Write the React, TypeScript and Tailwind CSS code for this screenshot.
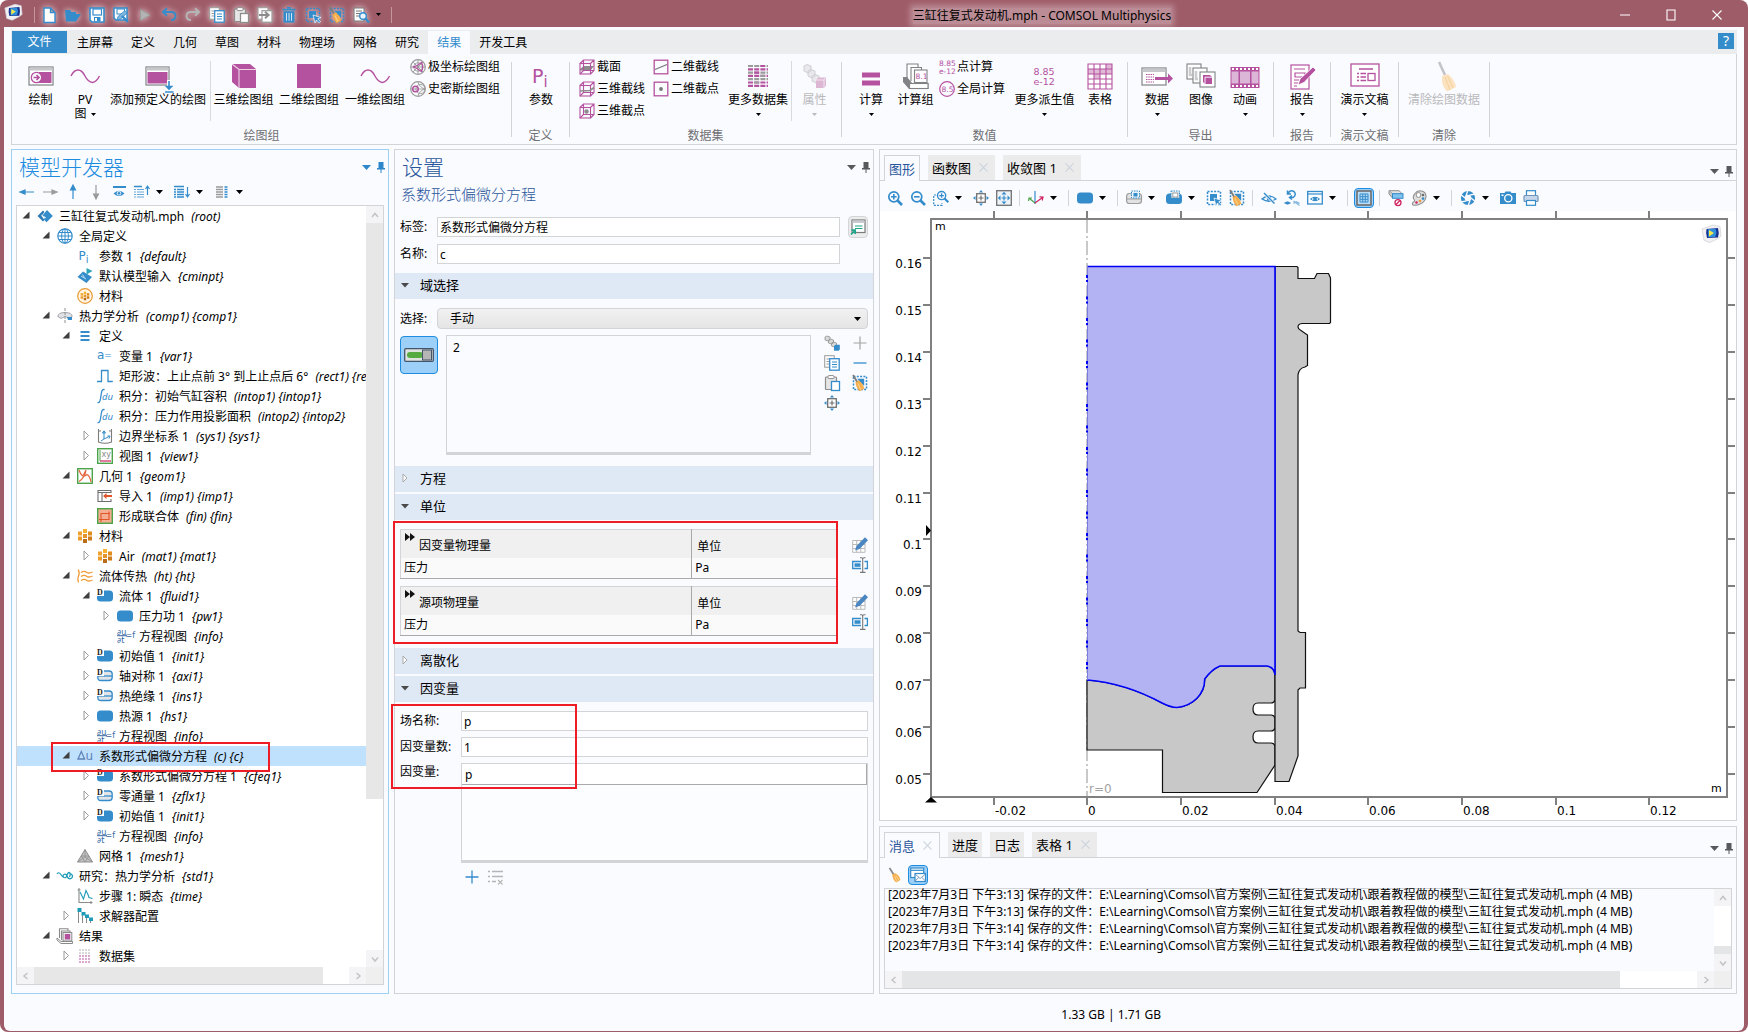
import React, { type ReactNode } from "react";

const B = "#358ccb";
const P = "#b5529f";
const G = "#808285";
const L = "#b4b4b4";

/* ---------- 16px icon drawings ---------- */

const dashedBox = <rect x="1.5" y="1.5" width="13" height="13" fill="none" stroke={B} strokeWidth="1.5" strokeDasharray="2 1.3" />;
const broom = (
  <g>
    <path d="M2.5 1 L7 8" stroke="#8a8a8a" strokeWidth="1.8" />
    <path d="M5.2 7.6 L8.6 6.2 Q13 9 13.4 13 L9.2 15.6 Q5.6 13 5.2 7.6Z" fill="#f5b04f" />
    <path d="M7.5 9 L10 14.6 M9 8.4 L12 13.4" stroke="#fbd9a2" strokeWidth="0.8" />
  </g>
);
const domain = <path d="M3.5 2.5 H12.5 Q16 2.5 16 6 V10 Q16 13.5 12.5 13.5 H3.5 Q0 13.5 0 10 V6 Q0 2.5 3.5 2.5Z" fill={B} />;
const letterD = (
  <g>
    <rect x="0" y="0" width="7" height="8" fill="#fff" />
    <text x="0" y="7" fontSize="8" fontWeight="700" fontFamily="Liberation Serif" fill="#222">D</text>
  </g>
);
const cube = (
  <g fill="none" stroke={P} strokeWidth="1.1">
    <rect x="1" y="4.5" width="10.5" height="10.5" />
    <path d="M1 4.5 L4.5 1 H15 V11.5 L11.5 15 M11.5 4.5 L15 1 M4.5 1 V11.5 H15 M4.5 11.5 L1 15" />
  </g>
);
const orangeBlocks = (
  <g>
    <rect x="1" y="3.5" width="4" height="4" fill="#f0a22f" />
    <rect x="6" y="1" width="4" height="4" fill="#f7b234" />
    <rect x="11" y="3.5" width="4" height="4" fill="#e08c1f" />
    <rect x="1" y="8.5" width="4" height="4" fill="#ee9b28" />
    <rect x="6" y="6" width="4" height="4" fill="#e3942c" />
    <rect x="11" y="8.5" width="4" height="4" fill="#cf7d1c" />
    <rect x="6" y="11" width="4" height="4" fill="#b96d1a" />
  </g>
);
const magnifier = (
  <g fill="none" stroke={B}>
    <circle cx="6.8" cy="6.8" r="5" strokeWidth="1.7" />
    <path d="M10.5 10.5 L15 15" strokeWidth="2.6" />
  </g>
);
const targetArrows = (
  <g fill={B}>
    <path d="M8 0 L10 2.5 H6Z M8 16 L10 13.5 H6Z M0 8 L2.5 6 V10Z M16 8 L13.5 6 V10Z" />
  </g>
);
const boundary = (
  <g>
    <path d="M3.5 3 H12 Q15.2 3 15.2 6 V9.5 Q15.2 12.5 12 12.5 H3.8 Q.8 12.5 .8 9.5 V6 Q.8 3 3.5 3Z" fill="#e2e4e8" stroke={B} strokeWidth="1.3" />
    <path d="M1 8 H15" stroke={B} strokeWidth="1.3" />
  </g>
);
const cubes = (last: string) => (
  <g>
    <path d="M1 2 L3 1 L6 2 V5 L4 6 L1 5Z M4.5 5 L6.5 4 L9.5 5 V8 L7.5 9 L4.5 8Z M7.5 8 L9.5 7 L12.5 8 V11 L10.5 12 L7.5 11Z" fill="#d9d9d9" stroke="#9a9a9a" strokeWidth=".9" />
    <path d="M10 11 L11.5 9.8 H15.8 V14.5 L14.5 15.8 H10Z" fill={last} />
  </g>
);

const icons: Record<string, ReactNode> = {
  new: <path d="M3 1 H9.5 L14 5.5 V15.5 H3Z M9.5 1 V5.5 H14" fill="#fff" stroke={B} strokeWidth="1.4" />,
  open: <path d="M0 3 H5 L6.5 5 H11 V7 H16 L11 14.5 H1Z" fill={B} />,
  save: (
    <g>
      <path d="M1 1 H15 V15 H3 L1 13Z" fill="#fff" stroke={B} strokeWidth="1.6" />
      <rect x="4" y="2" width="8.5" height="6" fill="#fff" stroke={B} strokeWidth="1.2" />
      <rect x="5" y="10" width="6.5" height="4.5" fill={B} />
      <rect x="6" y="11" width="2" height="3" fill="#fff" />
    </g>
  ),
  saveas: (
    <g>
      <path d="M1 1 H14 V13 H3 L1 11Z" fill="#fff" stroke={B} strokeWidth="1.5" />
      <rect x="4" y="2" width="7.5" height="5" fill="#fff" stroke={B} />
      <path d="M4 13 L5 9.5 L12 3.5 L14 6 L7.5 12.2Z" fill="#7fb6df" stroke={B} strokeWidth=".8" />
      <path d="M9 9 L15 15" stroke={B} strokeWidth="2.4" />
    </g>
  ),
  run: <path d="M3.5 2.5 L13 8 L3.5 13.5Z" fill="#b3b3b3" stroke="#9b9b9b" />,
  undo: <path d="M2 5 H10 Q14.5 5 14.5 9 Q14.5 13 10 13 M6 1.2 L2 5 L6 8.8" fill="none" stroke={B} strokeWidth="1.9" />,
  redo: <path d="M14 5 H6 Q1.5 5 1.5 9 Q1.5 13 6 13 M10 1.2 L14 5 L10 8.8" fill="none" stroke="#b5b5b5" strokeWidth="1.9" />,
  copy: (
    <g>
      <rect x=".7" y=".7" width="9.5" height="11.5" fill="#fff" stroke="#9a9a9a" />
      <path d="M2.5 4 H5 M2.5 6.5 H5 M2.5 9 H5" stroke="#9a9a9a" />
      <rect x="5.7" y="3.7" width="9.5" height="11.5" fill="#fff" stroke={B} strokeWidth="1.3" />
      <path d="M8 7 H13 M8 9.5 H13 M8 12 H13" stroke={B} />
    </g>
  ),
  paste: (
    <g>
      <rect x="1.5" y="2" width="11" height="12.5" rx="1" fill="#e6e6e6" stroke="#8d8d8d" strokeWidth="1.2" />
      <rect x="4" y=".6" width="6" height="3" rx="1" fill="#fff" stroke="#8d8d8d" />
      <rect x="7.5" y="6.5" width="8" height="9" fill="#fff" stroke="#8d8d8d" strokeWidth="1.3" />
    </g>
  ),
  pasteBlue: (
    <g>
      <rect x="1.5" y="2" width="11" height="12.5" rx="1" fill="#e6e6e6" stroke="#8d8d8d" strokeWidth="1.2" />
      <rect x="4" y=".6" width="6" height="3" rx="1" fill="#fff" stroke="#8d8d8d" />
      <rect x="7.5" y="6.5" width="8" height="9" fill="#fff" stroke={B} strokeWidth="1.3" />
    </g>
  ),
  duplicate: (
    <g>
      <rect x="1" y=".7" width="10" height="11.5" fill="#fff" stroke="#9a9a9a" />
      <rect x="5" y="3.7" width="10" height="11.5" fill="#fff" stroke="#9a9a9a" strokeWidth="1.2" />
      <path d="M2 8 H11 M8 4.8 L11.6 8 L8 11.2" fill="none" stroke="#8d8d8d" strokeWidth="2" />
    </g>
  ),
  trash: (
    <g>
      <path d="M6 .8 H10 M1.5 2.6 H14.5" stroke={B} strokeWidth="1.6" />
      <path d="M2.5 4.2 H13.5 V15.6 H2.5Z" fill={B} />
      <path d="M5.5 6 V13.8 M8 6 V13.8 M10.5 6 V13.8" stroke="#cfe5f5" />
    </g>
  ),
  select: (
    <g>
      {dashedBox}
      <rect x="4" y="4" width="7" height="7" fill={B} />
      <path d="M8 8 L16 10.5 L12.8 11.8 L15.5 14.8 L14.2 16 L11.5 13 L10 16Z" fill={B} stroke="#fff" strokeWidth=".7" />
    </g>
  ),
  clearsel: (
    <g>
      {dashedBox}
      <path d="M5 3.8 H12.2 V11Z" fill={B} />
      <path d="M1 0 L5.5 7.5" stroke="#7d7d7d" strokeWidth="1.8" />
      <path d="M3.8 7.4 L7 5.6 Q11 9 12.2 13.6 L7.6 16 Q4.2 12.5 3.8 7.4Z" fill="#f5b04f" stroke="#e79a34" strokeWidth=".4" />
      <path d="M6 8.5 L8.8 14.6" stroke="#fbd9a2" strokeWidth="0.8" />
    </g>
  ),
  find: (
    <g>
      <rect x="1" y="1" width="10" height="13" fill="#fff" stroke="#777" />
      <path d="M3 4 H9 M3 6.5 H9 M3 9 H6" stroke="#777" />
      <circle cx="10" cy="9" r="3.3" fill="#eaf4fc" stroke={B} strokeWidth="1.4" />
      <path d="M12.4 11.4 L16 15.4" stroke={B} strokeWidth="2.2" />
    </g>
  ),
  broom,
  root: (
    <g>
      <path d="M.5 8 L6 2.5 L7.5 4 L4.5 8 L7.5 12 L6 13.5Z" fill="#2e7ab5" />
      <path d="M5.5 7.5 L10 2 L15.8 8 L9.5 14.2 L6.5 11 L9 9.5Z" fill={B} />
      <path d="M4 7 L9 10" stroke="#bfe0f7" strokeWidth=".8" />
    </g>
  ),
  globe: (
    <g fill="none" stroke={B}>
      <circle cx="8" cy="8" r="7.2" strokeWidth="1.2" />
      <ellipse cx="8" cy="8" rx="3.4" ry="7.2" />
      <path d="M8 1 V15 M1 8 H15 M2 4.5 H14 M2 11.5 H14" />
    </g>
  ),
  pi: <text x="1.5" y="12" fontSize="12" fontFamily="DejaVu Sans" fill={B}>P<tspan fontSize="10" dy="3">i</tspan></text>,
  modelin: (
    <g>
      <path d="M.5 9 L6 3.5 L15 9 L9.5 15 L5 12Z" fill={B} />
      <path d="M4 8 L9 11 M5.5 6.5 L7.5 9.5" stroke="#cfe6f7" strokeWidth=".9" />
      <path d="M9.5 0 L15.5 3 L9.5 6.5Z" fill="#2ba3b8" />
    </g>
  ),
  matGlobe: (
    <g>
      <circle cx="8" cy="8" r="7.3" fill="#fff6e6" stroke="#e79a34" strokeWidth="1.2" />
      <g transform="translate(3 3) scale(.62)">{orangeBlocks}</g>
    </g>
  ),
  comp: (
    <g>
      <path d="M.8 8.5 Q1 4.5 8 4.5 Q15 4.5 15.2 8.5 L12 10 L8 8.5 L4 10.5Z" fill="#dfe1e4" stroke="#a5a8ac" />
      <path d="M10 9 H15 V12 H11Z" fill={B} />
      <path d="M8 0 V16" stroke="#8e9195" strokeDasharray="3 1" />
    </g>
  ),
  defs: <path d="M3.5 4 H12.5 M3.5 8 H12.5 M3.5 12 H12.5" stroke={B} strokeWidth="2" />,
  vara: <text x="0" y="11" fontSize="12" fontFamily="DejaVu Sans" fill={B}>a<tspan fontSize="9" dy="-1">=</tspan></text>,
  rect: <path d="M0 13.5 H4.5 V2.5 H11 V13.5 H15.8" fill="none" stroke={B} strokeWidth="1.3" />,
  intop: (
    <g>
      <path d="M.5 14.5 Q3 15.5 3.6 10 L4.4 5 Q5 .8 7.6 1.6" fill="none" stroke={B} strokeWidth="1.3" />
      <text x="5" y="12" fontSize="9.5" fontStyle="italic" fontFamily="Noto Sans" fill={B}>du</text>
    </g>
  ),
  sys: (
    <g fill="none">
      <path d="M1.5 1 V14 Q8 16.5 14.5 14 V1 M1.5 3 H4 M12 3 H14.5" stroke="#7c7c7c" strokeWidth="1.1" />
      <path d="M7 4 V11 L12 8.5 M7 11 L4 13 M7 2.8 L5.5 5 H8.5Z M10.5 8 L13 8 L12 10.5" stroke={B} />
    </g>
  ),
  view: (
    <g>
      <rect x=".7" y=".7" width="14.6" height="14.6" fill="#fff" stroke="#4da34a" strokeWidth="1.4" />
      <text x="4.5" y="8.5" fontSize="8" fontFamily="DejaVu Sans" fill="#8a8a8a">xy</text>
      <path d="M3 13 H14" stroke="#d0235f" strokeWidth="1.2" />
      <path d="M3 2 V13" stroke="#4da34a" />
    </g>
  ),
  geom: (
    <g fill="none">
      <rect x=".7" y=".7" width="14.6" height="14.6" stroke="#4da34a" strokeWidth="1.4" />
      <path d="M2 2 Q5 11 10 6.5 Q13 8 14 14 M2 13.5 Q8 9.5 9 2 L6.5 7" stroke="#e5653a" strokeWidth="1.2" />
    </g>
  ),
  imp: (
    <g fill="none" stroke="#6f6f6f">
      <path d="M14 5 V2.5 H1 V13.5 H14 V11 M1 4.5 H14 M5 4.5 V13.5" strokeWidth="1.1" />
      <path d="M15 8 H8" stroke="#e0562b" strokeWidth="2" />
      <path d="M6 8 L9.5 5 V11Z" fill="#e0562b" stroke="none" />
    </g>
  ),
  fin: (
    <g>
      <rect x=".7" y=".7" width="14.6" height="14.6" fill="#f4ae92" stroke="#4da34a" strokeWidth="1.4" />
      <path d="M2 11.5 H12 V3.5 M4 14 V5.5 H13" fill="none" stroke="#e0562b" strokeWidth="1.1" />
    </g>
  ),
  blocks: orangeBlocks,
  ht: (
    <g fill="none" stroke="#ef9c36" strokeWidth="1.3">
      <path d="M1.2 1.5 Q3 5 1.5 8 Q0 11 1.5 14.5" />
      <path d="M4 4.5 Q7 2.5 9.5 4.2 T15.5 4 M4 8.5 Q7 6.5 9.5 8.2 T15.5 8 M4 12.5 Q7 10.5 9.5 12.2 T15.5 12" />
    </g>
  ),
  domD: <g>{domain}{letterD}</g>,
  dom: domain,
  bndD: <g>{boundary}{letterD}</g>,
  eqview: (
    <g fill="#3567a3" fontFamily="DejaVu Sans">
      <text x="0" y="6.5" fontSize="8">∂u</text>
      <path d="M0 7.7 H10" stroke="#3567a3" />
      <text x="0" y="15" fontSize="8">∂t</text>
      <text x="8.5" y="9.5" fontSize="8">=f</text>
    </g>
  ),
  pde: (
    <g>
      <path d="M1 11 L4.3 3.5 L7.6 11Z" fill="none" stroke="#5f82b8" strokeWidth="1.3" />
      <text x="8.4" y="12" fontSize="12" fontFamily="DejaVu Sans" fill="#5f82b8">u</text>
    </g>
  ),
  mesh: (
    <g>
      <path d="M8 1.5 L15.5 14 H.5Z" fill="#c4c4c4" stroke="#8e8e8e" />
      <path d="M8 1.5 L8 9 L.5 14 M8 9 L15.5 14 M4.2 8 L12 8 L8 14Z" fill="none" stroke="#8e8e8e" strokeWidth=".8" />
    </g>
  ),
  study: <path d="M0 6 Q2 3.5 3.5 6 T7 9.5 Q9 10.5 10 7.5 Q11 4 12.5 4.5 Q14 6 12.5 9 M7 9.5 Q5 8 7 6.5 Q9 5.5 10 8 Q11 10.8 13 10.8 Q15.5 10.5 15.5 8 Q15 5.5 12.8 6.5" fill="none" stroke="#1f9bb8" strokeWidth="1.2" />,
  time: (
    <g fill="none">
      <path d="M2 0 V14.5 H15.5 M.5 2 H3.5 M14 13 V16" stroke="#8a8a8a" strokeWidth="1.1" />
      <path d="M3 4 L6.5 11 L9 2.5 Q11 6 12 9.5 L15.5 10.5" stroke="#1f9bb8" strokeWidth="1.1" />
    </g>
  ),
  solver: (
    <g>
      <path d="M1.5 2 V15 M5.5 6 V15 M9.5 9 V15 M13.5 12 V15" stroke="#8a8a8a" />
      <rect x=".5" y="0" width="4" height="4" fill="#1f9bb8" />
      <rect x="4.5" y="4" width="4" height="3.5" fill="#1f9bb8" />
      <rect x="8" y="6.5" width="4" height="3.5" fill="#1f9bb8" />
      <rect x="12" y="9.5" width="4" height="3.5" fill="#1f9bb8" />
    </g>
  ),
  results: (
    <g>
      <path d="M2.5 10 V.8 H11 V2.5 M4.5 12 V3 H13 V5" fill="none" stroke="#8a8a8a" strokeWidth="1.1" />
      <rect x="6" y="4.5" width="8.8" height="8.5" fill="#eee" stroke="#8a8a8a" />
      <rect x="7.8" y="6" width="5.4" height="5.5" fill={P} />
      <path d="M0 10 L4 13.5 H15.5 V15.5 H4 L0 12Z" fill="#fff" stroke="#8a8a8a" />
    </g>
  ),
  datasets: (
    <g strokeDasharray="2 1" strokeWidth="1.2">
      <path d="M2 2 H13 M2 5 H13" stroke={L} />
      <path d="M2 8 H13 M2 11 H13 M2 14 H13" stroke={P} />
    </g>
  ),
  arrowL: <path d="M15 8 H4 M6 6 L1 8 L6 10Z" fill={B} stroke={B} strokeWidth="1.2" />,
  arrowR: <path d="M1 8 H12 M10 6 L15 8 L10 10Z" fill="#9b9b9b" stroke="#9b9b9b" strokeWidth="1.2" />,
  arrowU: <path d="M8 15 V4 M5.5 6 L8 1 L10.5 6Z" fill={B} stroke={B} strokeWidth="1.2" />,
  arrowD: <path d="M8 1 V12 M5.5 10 L8 15 L10.5 10Z" fill="#9b9b9b" stroke="#9b9b9b" strokeWidth="1.2" />,
  eyeTop: (
    <g>
      <path d="M2 3 H15" stroke={B} strokeWidth="1.8" />
      <path d="M2.5 9.5 Q8 4 13.5 9.5 Q8 14.5 2.5 9.5Z" fill={B} />
      <circle cx="8" cy="9.3" r="2.3" fill="#cfe6f7" />
      <circle cx="8" cy="9.3" r="1.2" fill={B} />
    </g>
  ),
  listUp: (
    <g stroke={B}>
      <path d="M0 2.5 H8" strokeWidth="1.6" />
      <path d="M0 5.5 H2 M0 8 H2 M0 10.5 H2 M0 13 H2 M3 5.5 H10 M3 8 H10 M3 10.5 H10 M3 13 H10" strokeOpacity=".75" />
      <path d="M13.5 11 V3 M11.5 5 L13.5 2 L15.5 5" fill="none" strokeWidth="1.2" />
    </g>
  ),
  listDown: (
    <g stroke={B}>
      <path d="M0 2.5 H10" strokeWidth="1.6" />
      <path d="M0 5.5 H2 M0 8 H2 M0 10.5 H2 M0 13 H2 M3 5.5 H10 M3 8 H10 M3 10.5 H10 M3 13 H10" strokeWidth="1.3" />
      <path d="M13.5 3 V12 M11.5 10 L13.5 13 L15.5 10" fill="none" strokeWidth="1.2" />
    </g>
  ),
  listCols: (
    <g>
      <path d="M2 3 H9 M2 5.5 H9 M2 8 H9 M2 10.5 H9 M2 13 H9" stroke="#9b9b9b" strokeWidth="1.3" />
      <path d="M10.5 3 H13.5 M10.5 5.5 H13.5 M10.5 8 H13.5 M10.5 10.5 H13.5 M10.5 13 H13.5" stroke={B} strokeWidth="1.5" />
    </g>
  ),
  zoomIn: <g>{magnifier}<path d="M4 6.8 H9.6 M6.8 4 V9.6" stroke={B} strokeWidth="1.6" /></g>,
  zoomOut: <g>{magnifier}<path d="M4 6.8 H9.6" stroke={B} strokeWidth="1.6" /></g>,
  zoomBox: (
    <g>
      <path d="M3 5 H0.7 V15.3 H9 V13" fill="none" stroke={B} strokeWidth="1.2" strokeDasharray="2 1.2" />
      <g transform="translate(3 0) scale(.82)">{magnifier}<path d="M4 6.8 H9.6 M6.8 4 V9.6" stroke={B} strokeWidth="1.6" /></g>
    </g>
  ),
  target: (
    <g>
      {targetArrows}
      <rect x="3.7" y="3.7" width="8.6" height="8.6" fill="#fff" stroke="#707070" strokeWidth="1.3" />
      <path d="M5.5 8 H10.5 M8 5.5 V10.5" stroke="#707070" strokeWidth="1.2" />
    </g>
  ),
  extents: (
    <g>
      <rect x=".7" y=".7" width="14.6" height="14.6" fill="#eef3f8" stroke="#707070" strokeWidth="1.3" />
      <path d="M8 1.8 L10.5 4.5 H5.5Z M8 14.2 L10.5 11.5 H5.5Z M1.8 8 L4.5 5.5 V10.5Z M14.2 8 L11.5 5.5 V10.5Z" fill={B} />
      <path d="M5.5 8 H10.5 M8 5.5 V10.5" stroke={B} strokeWidth="1.2" />
    </g>
  ),
  axes: (
    <g fill="none" strokeWidth="1.2">
      <path d="M7 1 V14" stroke={B} />
      <path d="M7 13 L1.5 8.5 M0.5 11 L1 8 L4 8" stroke="#4da34a" />
      <path d="M7 13 L14.5 7.5 M11.5 6.8 L15 7 L14.2 10.5" stroke="#d0235f" />
    </g>
  ),
  selDomain: (
    <g>
      <path d="M3.500 3.500 H12.5 Q15.500 3.500 15.500 6.500 V10.500 Q15.500 13.500 12.5 13.500 H3.500 Q.6 13.500 .6 10.500 V6.500 Q.6 3.500 3.500 3.500Z M.6 9 H15.400" fill="#e2e2e2" stroke="#9d9d9d" strokeWidth="1.2" />
      <rect x="5.5" y="1" width="8" height="7" fill="#e8f3fb" stroke={B} strokeDasharray="1.5 1" />
      <rect x="7.5" y="3" width="4" height="3.5" fill={B} />
    </g>
  ),
  selDomainBlue: (
    <g>
      <path d="M3.5 3.500 H12.5 Q16 3.500 16 7 V10.5 Q16 14 12.5 14 H3.5 Q0 14 0 10.5 V7 Q0 3.500 3.5 3.500Z" fill={B} />
      <rect x="5" y="1" width="8.5" height="7" fill="#e8f3fb" stroke={B} strokeDasharray="1.5 1" />
      <rect x="6.8" y="3" width="5" height="4" fill="#fff" stroke="#9d9d9d" />
    </g>
  ),
  hide: (
    <g fill="none" stroke={B} strokeWidth="1.3">
      <path d="M1 9 Q8 3 15 9 Q8 13.500 1 9Z" />
      <circle cx="8" cy="8.6" r="1.6" fill={B} />
      <path d="M3.500 3.500 L13.500 13.500" stroke="#fafbff" strokeWidth="3" />
      <path d="M3 3 L13.500 13.500" strokeWidth="1.5" />
    </g>
  ),
  resetHide: (
    <g fill="none" stroke={B} strokeWidth="1.3">
      <path d="M4 3.500 Q6 -.5 10 1.500 Q13 5 9 7.500 H6 M3.500 .5 V4 H7 M8 5.500 L5.500 7.500 L8 9.500" strokeWidth="1.5" />
      <path d="M.5 13 Q3.500 10.300 6.500 13 Q3.500 15.500 .5 13Z" fill={B} strokeWidth=".6" />
      <path d="M9.500 11 L15.500 15.500 M9.500 13.500 Q12 10.500 15.500 13.500" opacity=".6" />
    </g>
  ),
  viewWin: (
    <g fill="none" stroke={B}>
      <rect x=".7" y="1.5" width="14.6" height="12.5" strokeWidth="1.3" fill="#fff" />
      <path d="M.7 4 H15.3" strokeWidth="1.2" />
      <path d="M3.5 9 Q8 5.5 12.5 9 Q8 12.5 3.5 9Z" />
      <circle cx="8" cy="9" r="1.4" fill={B} />
    </g>
  ),
  grid: (
    <g fill="none" stroke="#6d6d6d">
      <rect x="1" y="1" width="14" height="14" fill="#b9ddf8" strokeWidth="1.6" />
      <path d="M4 4 H12 V12 H4Z M6.7 4 V12 M9.3 4 V12 M4 6.7 H12 M4 9.3 H12" stroke={B} />
    </g>
  ),
  noClip: (
    <g>
      <path d="M1 .7 H11 L14.5 4 H5Z" fill="#e4e4e4" stroke="#8f8f8f" />
      <path d="M1 .7 V4 L4.5 8 V4" fill="#c8c8c8" stroke="#8f8f8f" />
      <rect x="4.5" y="3.7" width="10.5" height="4.6" fill="#80c3ef" stroke={B} />
      <circle cx="10" cy="12.6" r="3" fill="#fff" stroke="#d0235f" strokeWidth="1.3" />
      <path d="M8 14.5 L12 10.5" stroke="#d0235f" strokeWidth="1.3" />
    </g>
  ),
  palette: (
    <g>
      <path d="M9 .8 Q15 1 15 6.5 Q14.5 12 9 14 Q6 15.8 2 15 Q.5 13.5 2.5 12 Q4.5 11 2.8 9 Q1.5 7 3.5 4 Q6 .8 9 .8Z" fill="#dedede" stroke="#8f8f8f" strokeWidth="1.1" />
      <circle cx="7.5" cy="5" r="2.4" fill="#fff" stroke="#8f8f8f" />
      <circle cx="12" cy="5" r="1.3" fill="#6d6d6d" />
      <circle cx="12" cy="8.6" r="1.3" fill={B} />
      <circle cx="9" cy="11" r="1.3" fill="#ef9c36" />
      <circle cx="5.5" cy="12.5" r="1.2" fill="#d0235f" />
    </g>
  ),
  shutter: (
    <g>
      <circle cx="8" cy="8" r="5.2" fill="none" stroke={B} strokeWidth="3.800" />
      <path d="M8 0 L6 6 M15 4 L9.5 5.2 M15.3 11.5 L11 8 M8 16 L10 10.5 M1 12 L6.5 10.8 M.8 4.5 L5 8" stroke="#fafbff" strokeWidth="1.3" />
    </g>
  ),
  camera: (
    <g>
      <path d="M0 3 H4.5 L5.5 1.5 H10.5 L11.5 3 H16 V14 H0Z" fill={B} />
      <circle cx="8.3" cy="8.3" r="3.6" fill="none" stroke="#fff" strokeWidth="1.3" />
      <rect x="1.5" y="4.5" width="2" height="1.5" fill="#fff" />
    </g>
  ),
  print: (
    <g stroke={B} strokeWidth="1.2">
      <rect x="3.5" y=".7" width="9" height="5" fill="#fff" />
      <rect x="1" y="5.5" width="14" height="6" rx="1" fill="#c5d6ea" stroke="#6f93bb" />
      <rect x="3.5" y="10.5" width="9" height="4.8" fill="#fff" />
    </g>
  ),
  msgWin: (
    <g fill="#fff" stroke={B} strokeWidth="1.2">
      <rect x=".7" y="1" width="13" height="9.5" />
      <path d="M.7 3.3 H13.7" />
      <rect x="5" y="6.5" width="10.5" height="8" />
      <path d="M5 7 L10.2 11.5 L15.5 7 M5 14 L8.8 10.5 M15.5 14 L11.8 10.5" fill="none" stroke="#6f93bb" strokeWidth=".9" />
    </g>
  ),
  labelWin: (
    <g>
      <rect x="2" y="1" width="13" height="12.5" fill="#fff" stroke="#7a7a7a" strokeWidth="1.2" />
      <rect x="2.5" y="1.5" width="12" height="2.5" fill="#c9c9d2" />
      <path d="M5 7 H12.5 M5 9.5 H12.5" stroke="#1fa68c" strokeWidth="1.2" />
      <path d="M1 15.5 L4.5 12 M1.5 11.2 H5.2 V15" fill="none" stroke="#1fa68c" strokeWidth="1.7" />
    </g>
  ),
  cubesBlue: cubes(B),
  plusGray: <path d="M1.5 8 H14.5 M8 1.5 V14.5" stroke="#a3a3a3" strokeWidth="1.2" />,
  plus: <path d="M1.5 8 H14.5 M8 1.5 V14.5" stroke={B} strokeWidth="1.3" />,
  minus: <path d="M1.5 8 H14.5" stroke={B} strokeWidth="1.3" />,
  tablePen: (
    <g>
      <path d="M.7 3.5 H13 V15.3 H.7Z M.7 7.5 H13 M.7 11.5 H13 M4.7 3.5 V15.3 M8.8 3.5 V15.3" fill="#fff" stroke="#b9b9b9" />
      <path d="M3 13.5 L4.5 9 L13 .3 L16 3.2 L7.5 12Z" fill="#4a86c2" />
    </g>
  ),
  rename: (
    <g>
      <path d="M9 4.5 H.7 V11.5 H9 M12.5 4.5 H15.4 V11.5 H12.5" fill="none" stroke={B} strokeWidth="1.3" />
      <rect x="2.5" y="6.3" width="6" height="3.5" fill={B} />
      <path d="M10.7 1 V15.4 M8 .7 H9.5 Q10.7 .7 10.7 2 Q10.7 .7 12 .7 H13.5 M8 15.4 H13.5" fill="none" stroke="#777" strokeWidth="1.1" />
    </g>
  ),
  listX: (
    <g stroke="#b4b4b4" strokeWidth="1.7">
      <path d="M0 2.5 H2 M4 2.5 H15 M0 7.5 H2 M4 7.5 H15 M0 12.5 H2 M4 12.5 H8" />
      <path d="M10 11 L14.5 15.5 M14.5 11 L10 15.5" strokeWidth="1.1" />
    </g>
  ),
  polar: (
    <g fill="none" stroke="#9a9a9a" strokeWidth=".9">
      <circle cx="8" cy="8" r="7.3" strokeWidth="1.2" /><circle cx="8" cy="8" r="4.2" />
      <path d="M8 .7 V15.3 M.7 8 H15.3 M3 3 L13 13 M13 3 L3 13" />
      <path d="M11.5 3.5 Q14 8 11.5 12.5 L7 9.5 L3.5 8 L8 6Z" stroke={P} strokeWidth="1.3" />
    </g>
  ),
  smith: (
    <g fill="none" stroke="#9a9a9a" strokeWidth=".9">
      <circle cx="8" cy="8" r="7.3" strokeWidth="1.2" /><circle cx="10.5" cy="8" r="4.6" />
      <path d="M.7 8 H15.3 M8 1 Q9 6 15 8 Q9 10 8 15" />
      <circle cx="5.5" cy="8" r="2.8" stroke={P} strokeWidth="1.5" />
    </g>
  ),
  cutPlane: <g><path d="M1 10 L5 7 H15 L11.5 11.5 H1Z" fill="#8c8c8c" />{cube}</g>,
  cutLine3: <g>{cube}<path d="M1 10 L11 9.5 L15 6.5" fill="none" stroke="#8c8c8c" strokeWidth="1.6" /></g>,
  cutPoint3: <g>{cube}<circle cx="7.5" cy="8.5" r="2.2" fill="#8c8c8c" /></g>,
  cutLine2: (
    <g fill="none"><rect x="1.2" y="1.2" width="13.6" height="13.6" stroke={P} strokeWidth="1.3" /><path d="M2 10.5 L14 5.5" stroke="#777" strokeWidth="1.2" /></g>
  ),
  cutPoint2: (
    <g fill="none"><rect x="1.2" y="1.2" width="13.6" height="13.6" stroke={P} strokeWidth="1.3" /><circle cx="8" cy="8" r="1.9" fill="#777" /></g>
  ),
  pointEval: (
    <g fill={P} fontFamily="DejaVu Sans" fontSize="7.5"><text x="0" y="7">8.85</text><text x="0" y="14.5">e-12</text></g>
  ),
  globalEval: (
    <g><circle cx="8" cy="8" r="7.3" fill="none" stroke={P} strokeWidth="1.2" /><text x="2.6" y="10.8" fontSize="7.5" fontFamily="DejaVu Sans" fill={P}>8.5</text></g>
  ),
};

const LOGO = (
  <g>
    <path d="M1 5 L12 1 L19 2.5 L20 12 L18 14 L9 18.5 L3 16.5Z" fill="#f1f1f4" stroke="#d4d4da" strokeWidth=".8" />
    <path d="M5.5 5 L17 4 Q18.5 9 17 13.5 L6 14 Q4.5 9 5.5 5Z" fill="#16318f" />
    <path d="M7 5.2 L14.500 4.800 Q16.500 9 14 13 L7.300 13.2Z" fill="#2f8fdb" />
    <path d="M8 6 L13 9 L8 12.500Z" fill="#f3e94b" />
  </g>
);

/* ---------- 26px ribbon drawings ---------- */

const bigCube = <g><path d="M1 1 H19 L25 6 V25 H8 L1 19Z" fill={P} /><path d="M1 1 L8 6.5 H25 M8 6.5 V25" fill="none" stroke="#ecd3e6" strokeWidth="1.1" /></g>;

const bigIcons: Record<string, ReactNode> = {
  plot: (
    <g>
      <rect x="1" y="4" width="24" height="18" fill="#fff" stroke={G} strokeWidth="1.2" />
      <rect x="1.5" y="4.5" width="23" height="3" fill="#c5c7ca" />
      <rect x="11" y="9" width="12.5" height="11" fill={P} />
      <circle cx="8.5" cy="14.5" r="5.2" fill="#fafbff" stroke={P} strokeWidth="1.3" />
      <path d="M5.5 14.5 H11 M8.5 12 L11 14.5 L8.5 17" fill="none" stroke={P} strokeWidth="1.7" />
    </g>
  ),
  wave: <path d="M-1 13 Q2 7 6 7 Q10 7 13 13 T20.500 19.500 Q24.500 19 27.500 13" fill="none" stroke={P} strokeWidth="1.4" />,
  addplot: (
    <g>
      <rect x="1" y="4" width="23" height="18" fill="#fff" stroke={G} strokeWidth="1.2" />
      <rect x="1.5" y="4.5" width="22" height="3" fill="#c5c7ca" />
      <rect x="2.5" y="9" width="20" height="11.5" fill={P} />
      <path d="M24 17 V25" stroke="#fff" strokeWidth="4" />
      <path d="M24 18 V25 M21.500 23.500 L24 26 L26.500 23.500Z M20 29 H28.500" fill={B} stroke={B} strokeWidth="1.6" />
    </g>
  ),
  cube: bigCube,
  square: <rect x="1" y="1" width="24" height="24" fill={P} />,
  pi: <text x="4" y="20" fontSize="19" fontFamily="DejaVu Sans" fill={P}>P<tspan fontSize="15" dy="4">i</tspan></text>,
  moredata: (
    <g strokeWidth="2.2">
      <path d="M3 3 H23 M3 9.6 H23 M3 16.2 H23" stroke="#9b9b9b" strokeDasharray="5 1.2" />
      <path d="M3 6.3 H23 M3 12.9 H23 M3 19.5 H23 M3 22.8 H23" stroke={P} strokeDasharray="5 1.2" />
      <path d="M9.2 9.6 H14.2 M15.4 3 H20" stroke={P} />
      <path d="M9.2 19.5 H14.2 M15.4 12.9 H20" stroke="#9b9b9b" />
    </g>
  ),
  attr: (
    <g>
      <path d="M2 3 L5 1.5 L9 3 V8 L6 10 L2 8Z M6 8 L9 6.5 L13 8 V13 L10 15 L6 13Z M10 13 L13 11.5 L17 13 V18 L14 20 L10 18Z" fill="#e9e9ec" stroke="#cfcfd4" />
      <path d="M14 17 L16.5 14.5 H24 V22.5 L22 25 H14Z" fill="#dcb6d3" />
      <path d="M14 17 H22 V25 M22 17 L24 14.5" fill="none" stroke="#f3e4f0" />
    </g>
  ),
  equals: <path d="M4 12 H22 M4 20 H22" stroke={P} strokeWidth="5" />,
  evalgroup: (
    <g>
      <path d="M4 18 V1 H15 V4 M8 18 V4.5 H18.5 V7" fill="#fff" stroke={G} strokeWidth="1.1" />
      <rect x="11.5" y="7" width="12.500" height="12.500" fill="#fff" stroke={G} strokeWidth="1.1" />
      <text x="12.500" y="16" fontSize="7.500" fontFamily="DejaVu Sans" fill={P}>8.1</text>
      <path d="M0 14 L4 14 L9 20 L25.500 20 V26 H6 L0 19Z" fill={G} />
      <rect x="6.500" y="20.500" width="18.500" height="5" fill="#fff" stroke={G} strokeWidth="1.1" />
    </g>
  ),
  eval885: (
    <g fill={P} fontFamily="DejaVu Sans" fontSize="9.5"><text x="1.5" y="12">8.85</text><text x="1.5" y="22">e-12</text></g>
  ),
  table: (
    <g>
      <rect x="1" y="1" width="24" height="25" fill="#fff" />
      <path d="M19 1 H25 V6 H19Z M1 6 H25 V11 H1Z M7 11 H13 V16 H7Z" fill="#dfb9d6" />
      <path d="M1 1 H25 V26 H1Z M1 6 H25 M1 11 H25 M1 16 H25 M1 21 H25 M7 1 V26 M13 1 V26 M19 1 V26" fill="none" stroke={P} strokeWidth="1.1" />
    </g>
  ),
  dataout: (
    <g>
      <rect x="-2" y="5" width="24" height="17" fill="#fff" stroke={G} strokeWidth="1.2" />
      <rect x="-1.5" y="5.5" width="23" height="3.5" fill="#c5c7ca" />
      <path d="M2 11.5 H10 M2 14 H10 M2 16.5 H10 M2 19 H10" stroke={P} strokeWidth="1.2" strokeDasharray="1.5 .8" />
      <path d="M11 15.5 H25" stroke={P} strokeWidth="3" /><path d="M24 10.5 L29 15.5 L24 20.5Z" fill={P} />
    </g>
  ),
  images: (
    <g fill="#fff" stroke={G} strokeWidth="1.1">
      <rect x="-1" y="1" width="14" height="15" /><rect x="5" y="5" width="14" height="15" /><rect x="12" y="9" width="15" height="15" />
      <path d="M2 4 V12 H4 M8 8 V16 H10" stroke="#ccc" strokeWidth="2.500" fill="none" />
      <path d="M15 12 H22 L24 14 V21 H17 L15 19Z" fill={P} stroke="none" /><path d="M17 14.2 H24 M17 14.2 V21" stroke="#fff" strokeWidth=".9" />
    </g>
  ),
  film: (
    <g>
      <rect x="-1.5" y="4" width="29" height="21" fill={P} />
      <path d="M0 6 H27 M0 23 H27" stroke="#fff" strokeWidth="2" strokeDasharray="2 2" />
      <rect x="-.5" y="8.5" width="7" height="12" fill="#dcb6d6" /><rect x="8" y="8.5" width="10" height="12" fill="#dcb6d6" /><rect x="19.5" y="8.5" width="7" height="12" fill="#dcb6d6" />
    </g>
  ),
  report: (
    <g fill="none" stroke={P} strokeWidth="1.2">
      <rect x="2" y="2" width="18" height="24" fill="#fff" />
      <path d="M5 6 H16 M6 10 H16 V14 H6Z M5 17 H10 M5 20 H9 M5 23 H8" />
      <path d="M9 22 L11 16 L24 4 L27 7 L15 19.5Z" fill={P} stroke="#fff" strokeWidth=".8" />
    </g>
  ),
  slides: (
    <g fill="none" stroke={P} strokeWidth="1.3">
      <rect x="-1" y="1" width="28" height="22" fill="#fff" />
      <path d="M7 6 H21 M5 10.5 H7 M8.5 10.5 H14 M5 14 H7 M8.5 14 H14 M5 17.5 H7 M8.5 17.5 H14" />
      <rect x="16" y="10.5" width="7" height="7" />
    </g>
  ),
  bigbroom: (
    <g>
      <path d="M8 -1 L14 12" stroke="#c4c4c8" strokeWidth="2.6" />
      <path d="M11 13 L17 11 Q24 17 25 24 L16 28.5 Q10 23 11 13Z" fill="#fbe3c1" />
      <path d="M14 14 L19 27 M16.5 13 L22 25" stroke="#f5cf97" />
    </g>
  ),
};

function Icon({ name, className = "size-4" }: { name: string; className?: string }) {
  return (
    <svg viewBox="0 0 16 16" className={`${className} shrink-0 overflow-visible`} aria-hidden="true">
      {icons[name]}
    </svg>
  );
}

function BigIcon({ name }: { name: string }) {
  return (
    <svg viewBox="0 0 26 26" className="size-[26px] shrink-0 overflow-visible" aria-hidden="true">
      {bigIcons[name]}
    </svg>
  );
}

function Caret({ className = "text-black" }: { className?: string }) {
  return (
    <svg viewBox="0 0 7 4" className={`h-1 w-[7px] shrink-0 ${className}`} aria-hidden="true">
      <path d="M0 0 H7 L3.5 4Z" fill="currentColor" />
    </svg>
  );
}

function SmallCaret({ className = "text-black" }: { className?: string }) {
  return (
    <svg viewBox="0 0 5 3" className={`h-[3px] w-[5px] shrink-0 ${className}`} aria-hidden="true">
      <path d="M0 0 H5 L2.5 3Z" fill="currentColor" />
    </svg>
  );
}

function Chevron({ d }: { d: "up" | "down" | "left" | "right" }) {
  const paths = { up: "M2 7 L5 3.5 L8 7", down: "M2 3.5 L5 7 L8 3.5", left: "M6.5 2 L3 5 L6.5 8", right: "M3.5 2 L7 5 L3.5 8" };
  return (
    <button type="button" aria-label={d} className="flex size-[17px] shrink-0 items-center justify-center bg-[#f4f4f6]">
      <svg viewBox="0 0 10 10" className="size-2.5"><path d={paths[d]} fill="none" stroke="#c3c3c6" strokeWidth="1.5" /></svg>
    </button>
  );
}

function PanelControls({ className = "text-[#58595b]" }: { className?: string }) {
  return (
    <div className={`flex items-center gap-1.5 ${className}`}>
      <button type="button" aria-label="menu" className="flex w-2.5 justify-center">
        <svg viewBox="0 0 9 5" className="h-[5px] w-[9px]"><path d="M0 0 H9 L4.5 5Z" fill="currentColor" /></svg>
      </button>
      <button type="button" aria-label="pin">
        <svg viewBox="0 0 8 11" className="h-[11px] w-2"><path d="M1.5 0 H6.5 V6 H8 V7.5 H4.5 V11 H3.5 V7.5 H0 V6 H1.5Z" fill="currentColor" /></svg>
      </button>
    </div>
  );
}

/* ---------- title bar ---------- */

const quick = ["new", "open", "save", "saveas", "run", "undo", "redo", "copy", "paste", "duplicate", "trash", "select", "clearsel", "find"];

function TitleBar() {
  return (
    <header className="flex h-[27px] shrink-0 items-center pt-0.5">
      <svg viewBox="0 0 21 20" className="mb-1 size-[19px] shrink-0">{LOGO}</svg>
      <div className="ml-[11px] flex items-center border-x border-[#c4979f] pr-2 pl-[2px]">
        {quick.map((q) => (
          <button key={q} type="button" aria-label={q} className="flex w-6 justify-center drop-shadow-[0_0_3px_rgba(255,255,255,0.75)]">
            <Icon name={q} />
          </button>
        ))}
        <button type="button" aria-label="more" className="flex w-2.5 justify-center"><SmallCaret /></button>
      </div>
      <div className="flex flex-1 justify-center pt-0.5 pl-[90px]">
        <h1 className="h-4 bg-white/30 text-xs leading-4 whitespace-nowrap shadow-[0_0_6px_3px_rgba(255,255,255,0.3)]">三缸往复式发动机.mph - COMSOL Multiphysics</h1>
      </div>
      <div className="mr-1 flex text-white">
        {["M3 8 H13", "M4 3 H12 V13 H4Z", "M3.5 3.5 L12.5 12.5 M12.5 3.5 L3.5 12.5"].map((d, i) => (
          <button key={d} type="button" aria-label={["minimize", "maximize", "close"][i]} className="flex w-[46px] justify-center">
            <svg viewBox="0 0 16 16" className="size-4"><path d={d} fill="none" stroke="currentColor" strokeWidth="1.1" /></svg>
          </button>
        ))}
      </div>
    </header>
  );
}

/* ---------- ribbon ---------- */

function Big({ icon, label, w, menu, second, disabled }: { icon: string; label: string; w: string; menu?: boolean; second?: string; disabled?: boolean }) {
  return (
    <button type="button" disabled={disabled} className={`flex shrink-0 flex-col items-center pt-[7px] ${w} ${disabled ? "text-[#b9b9bc]" : ""}`}>
      <BigIcon name={icon} />
      <span className="mt-1 text-xs leading-[14px] whitespace-nowrap">{label}</span>
      {(menu || second) && (
        <span className="flex h-[14px] items-center gap-1 text-xs leading-[14px]">
          {second}
          <SmallCaret className={disabled ? "text-[#b9b9bc]" : "text-black"} />
        </span>
      )}
    </button>
  );
}

function SmallCol({ items, className }: { items: [string, string][]; className: string }) {
  return (
    <div className={`flex shrink-0 flex-col ${className}`}>
      {items.map(([icon, label]) => (
        <button key={label} type="button" className="flex h-[22px] items-center gap-0.5 text-xs leading-4 whitespace-nowrap">
          <Icon name={icon} />
          {label}
        </button>
      ))}
    </div>
  );
}

const InnerRule = () => <div className="mt-[5px] mb-[7px] w-px shrink-0 bg-[#d9dade]" />;

function Group({ title, children }: { title: string; children: ReactNode }) {
  return (
    <>
      <section className="flex flex-col pt-0.5" aria-label={title}>
        <div className="flex h-[72px]">{children}</div>
        <div className="text-center text-xs leading-4 text-[#6f7073]">{title}</div>
      </section>
      <div className="mt-2 mb-[7px] w-px shrink-0 bg-[#d3d4d8]" />
    </>
  );
}

const tabs = ["主屏幕", "定义", "几何", "草图", "材料", "物理场", "网格", "研究", "结果", "开发工具"];

function Ribbon() {
  return (
    <div className="mx-[7px] mt-[3px] shrink-0">
      <nav className="flex h-6 bg-[#ebecee] pt-px text-xs">
        <button type="button" className="mr-px ml-px h-[22px] w-[55px] bg-[#358ccb] text-white">文件</button>
        {tabs.map((t) => (
          <button key={t} type="button" className={`px-[9px] ${t === "结果" ? "bg-[#fafbff] text-[#358ccb]" : ""}`}>{t}</button>
        ))}
        <button type="button" className="mt-0.5 mr-[3px] ml-auto size-4 bg-[#358ccb] text-sm leading-4 text-white">?</button>
      </nav>
      <div className="flex h-[91px] border border-t-0 border-[#d3d4d8]">
        <Group title="绘图组">
          <Big icon="plot" label="绘制" w="ml-[5px] w-[47px]" />
          <Big icon="wave" label="PV" second="图" w="w-[42px]" />
          <Big icon="addplot" label="添加预定义的绘图" w="w-[104px]" />
          <InnerRule />
          <Big icon="cube" label="三维绘图组" w="w-[65px]" />
          <Big icon="square" label="二维绘图组" w="w-[66px]" />
          <Big icon="wave" label="一维绘图组" w="w-[66px]" />
          <SmallCol className="ml-0.5 w-[101px]" items={[["polar", "极坐标绘图组"], ["smith", "史密斯绘图组"]]} />
        </Group>
        <Group title="定义">
          <Big icon="pi" label="参数" w="mr-1 ml-[5px] w-12" />
        </Group>
        <Group title="数据集">
          <SmallCol className="ml-[9px] w-[74px]" items={[["cutPlane", "截面"], ["cutLine3", "三维截线"], ["cutPoint3", "三维截点"]]} />
          <SmallCol className="w-[72px]" items={[["cutLine2", "二维截线"], ["cutPoint2", "二维截点"]]} />
          <Big icon="moredata" label="更多数据集" w="w-[66px]" menu />
          <InnerRule />
          <Big icon="attr" label="属性" w="mr-1 w-[45px]" menu disabled />
        </Group>
        <Group title="数值">
          <Big icon="equals" label="计算" w="ml-[5px] w-12" menu />
          <Big icon="evalgroup" label="计算组" w="w-[41px]" />
          <SmallCol className="ml-[3px] w-[71px]" items={[["pointEval", "点计算"], ["globalEval", "全局计算"]]} />
          <Big icon="eval885" label="更多派生值" w="w-[69px]" menu />
          <Big icon="table" label="表格" w="mr-1.5 w-[42px]" />
        </Group>
        <Group title="导出">
          <Big icon="dataout" label="数据" w="ml-[7px] w-11" menu />
          <Big icon="images" label="图像" w="w-11" />
          <Big icon="film" label="动画" w="mr-1.5 w-11" menu />
        </Group>
        <Group title="报告">
          <Big icon="report" label="报告" w="mx-1 w-12" menu />
        </Group>
        <Group title="演示文稿">
          <Big icon="slides" label="演示文稿" w="w-[67px]" menu />
        </Group>
        <Group title="清除">
          <Big icon="bigbroom" label="清除绘图数据" w="w-[90px]" disabled />
        </Group>
      </div>
    </div>
  );
}

/* ---------- toolbars ---------- */

function Tool({ name, on, menu }: { name: string; on?: boolean; menu?: boolean }) {
  return (
    <>
      <button type="button" aria-label={name} className="flex w-[23px] shrink-0 justify-center">
        {on ? (
          <span className="flex size-5 items-center justify-center rounded-sm border border-[#1c8be0] bg-[#9dd0f8]"><Icon name={name} /></span>
        ) : (
          <Icon name={name} />
        )}
      </button>
      {menu && (
        <button type="button" aria-label={`${name} menu`} className="mr-[5px] flex w-3 shrink-0 justify-center"><Caret /></button>
      )}
    </>
  );
}

const Sep = () => <div className="mx-1 h-4 w-px shrink-0 bg-[#d3d4d8]" />;

/* ---------- model tree ---------- */

type Node = { l: number; s?: "o" | "c"; i: string; t: string; x?: string; sel?: boolean };

const tree: Node[] = [
  { l: 0, s: "o", i: "root", t: "三缸往复式发动机.mph", x: "(root)" },
  { l: 1, s: "o", i: "globe", t: "全局定义" },
  { l: 2, i: "pi", t: "参数 1", x: "{default}" },
  { l: 2, i: "modelin", t: "默认模型输入", x: "{cminpt}" },
  { l: 2, i: "matGlobe", t: "材料" },
  { l: 1, s: "o", i: "comp", t: "热力学分析", x: "(comp1) {comp1}" },
  { l: 2, s: "o", i: "defs", t: "定义" },
  { l: 3, i: "vara", t: "变量 1", x: "{var1}" },
  { l: 3, i: "rect", t: "矩形波：上止点前 3° 到上止点后 6°", x: "(rect1) {rect1}" },
  { l: 3, i: "intop", t: "积分：初始气缸容积", x: "(intop1) {intop1}" },
  { l: 3, i: "intop", t: "积分：压力作用投影面积", x: "(intop2) {intop2}" },
  { l: 3, s: "c", i: "sys", t: "边界坐标系 1", x: "(sys1) {sys1}" },
  { l: 3, s: "c", i: "view", t: "视图 1", x: "{view1}" },
  { l: 2, s: "o", i: "geom", t: "几何 1", x: "{geom1}" },
  { l: 3, i: "imp", t: "导入 1", x: "(imp1) {imp1}" },
  { l: 3, i: "fin", t: "形成联合体", x: "(fin) {fin}" },
  { l: 2, s: "o", i: "blocks", t: "材料" },
  { l: 3, s: "c", i: "blocks", t: "Air", x: "(mat1) {mat1}" },
  { l: 2, s: "o", i: "ht", t: "流体传热", x: "(ht) {ht}" },
  { l: 3, s: "o", i: "domD", t: "流体 1", x: "{fluid1}" },
  { l: 4, s: "c", i: "dom", t: "压力功 1", x: "{pw1}" },
  { l: 4, i: "eqview", t: "方程视图", x: "{info}" },
  { l: 3, s: "c", i: "domD", t: "初始值 1", x: "{init1}" },
  { l: 3, s: "c", i: "bndD", t: "轴对称 1", x: "{axi1}" },
  { l: 3, s: "c", i: "bndD", t: "热绝缘 1", x: "{ins1}" },
  { l: 3, s: "c", i: "dom", t: "热源 1", x: "{hs1}" },
  { l: 3, i: "eqview", t: "方程视图", x: "{info}" },
  { l: 2, s: "o", i: "pde", t: "系数形式偏微分方程", x: "(c) {c}", sel: true },
  { l: 3, s: "c", i: "domD", t: "系数形式偏微分方程 1", x: "{cfeq1}" },
  { l: 3, s: "c", i: "bndD", t: "零通量 1", x: "{zflx1}" },
  { l: 3, s: "c", i: "domD", t: "初始值 1", x: "{init1}" },
  { l: 3, i: "eqview", t: "方程视图", x: "{info}" },
  { l: 2, i: "mesh", t: "网格 1", x: "{mesh1}" },
  { l: 1, s: "o", i: "study", t: "研究：热力学分析", x: "{std1}" },
  { l: 2, i: "time", t: "步骤 1: 瞬态", x: "{time}" },
  { l: 2, s: "c", i: "solver", t: "求解器配置" },
  { l: 1, s: "o", i: "results", t: "结果" },
  { l: 2, s: "c", i: "datasets", t: "数据集" },
];

function TreeRow({ n }: { n: Node }) {
  return (
    <li
      className={`relative flex h-5 items-center text-xs leading-5 whitespace-nowrap ${n.sel ? "bg-[#c0e1fd]" : ""}`}
      style={{ paddingLeft: 3 + n.l * 20 }}
    >
      <svg viewBox="0 0 12 12" className="size-3 shrink-0">
        {n.s === "o" && <path d="M9.5 1.5 V8.5 H2.5Z" fill="#3f3f3f" />}
        {n.s === "c" && <path d="M4 1 L8.5 5.5 L4 10Z" fill="#fff" stroke="#9a9a9a" />}
      </svg>
      <span className="ml-[5px] flex"><Icon name={n.i} /></span>
      <span className="ml-1.5 pt-0.5">{n.t}</span>
      {n.x && <i className="ml-[7px] pt-0.5">{n.x}</i>}
      {n.sel && <span className="absolute -top-1 left-[34px] z-10 h-[30px] w-[219px] border-2 border-[#ee1c25]" />}
    </li>
  );
}

function ModelBuilder() {
  return (
    <aside className="flex min-w-0 flex-col border border-[#9dd0f3]">
      <div className="flex h-8 items-center justify-between pt-0.5 pr-[3px] pl-[7px]">
        <h2 className="text-[21px] leading-7 font-light text-[#1c8be0]">模型开发器</h2>
        <PanelControls className="text-[#2b86cc]" />
      </div>
      <div className="flex h-5 items-center pl-[3px]">
        <Tool name="arrowL" />
        <Tool name="arrowR" />
        <Tool name="arrowU" />
        <Tool name="arrowD" />
        <Tool name="eyeTop" />
        <Tool name="listUp" menu />
        <Tool name="listDown" menu />
        <Tool name="listCols" menu />
      </div>
      <div className="mx-1 mt-[3px] mb-2 flex min-h-0 flex-1 flex-col border border-[#d3d4d8] bg-white">
        <div className="flex min-h-0 flex-1">
          <ul className="min-w-0 flex-1 overflow-hidden">
            {tree.map((n, i) => <TreeRow key={i} n={n} />)}
          </ul>
          <div className="flex w-[17px] shrink-0 flex-col">
            <Chevron d="up" />
            <div className="flex-[576] bg-[#e7e7e7]" />
            <div className="flex-[151]" />
            <Chevron d="down" />
          </div>
        </div>
        <div className="flex h-[17px] shrink-0 bg-[#f4f4f6]">
          <Chevron d="left" />
          <div className="flex-[289] bg-[#e7e7e7]" />
          <div className="flex-[26] bg-white" />
          <Chevron d="right" />
          <div className="w-[17px] bg-[#efefef]" />
        </div>
      </div>
    </aside>
  );
}

/* ---------- settings ---------- */

function SectionHead({ title, open, className = "" }: { title: string; open?: boolean; className?: string }) {
  return (
    <button type="button" aria-expanded={!!open} className={`flex h-[26px] w-full shrink-0 items-center bg-[#dfe8f5] pb-0.5 pl-[5px] text-left text-[13px] leading-5 ${className}`}>
      <svg viewBox="0 0 10 10" className="mr-2.5 size-2.5 shrink-0">
        {open ? <path d="M1 3 H9 L5 7.5Z" fill="#4a4a4a" /> : <path d="M3 1 L7 5 L3 9Z" fill="#fff" stroke="#a9a9a9" />}
      </svg>
      {title}
    </button>
  );
}

const field = "h-5 min-w-0 flex-1 border border-[#d3d4d8] bg-white px-0.5 text-xs leading-4 outline-none";

function UnitTable({ head, className = "" }: { head: string; className?: string }) {
  return (
    <div className={`flex ${className}`}>
      <table className="flex-1 border border-[#d3d4d8] text-xs">
        <thead>
          <tr className="h-7 bg-[#f0f0f0]">
            <th className="w-2/3 border-r border-[#a9a9a9] p-0 text-left font-normal">
              <span className="flex items-start pl-1">
                <svg viewBox="0 0 10 8" className="mt-px h-2 w-2.5"><path d="M0 0 L5 4 L0 8Z M5 0 L10 4 L5 8Z" fill="#111" /></svg>
                <span className="mt-1.5 mb-0.5 ml-1 leading-4">{head}</span>
              </span>
            </th>
            <th className="p-0 pt-1.5 pl-[5px] text-left leading-4 font-normal">单位</th>
          </tr>
        </thead>
        <tbody>
          <tr className="h-[21px] border-b border-[#a9a9a9] bg-[#fafafa]">
            <td className="border-r border-[#a9a9a9] p-0 pl-[3px] leading-4">压力</td>
            <td className="p-0 pl-[3px] leading-4">Pa</td>
          </tr>
        </tbody>
      </table>
      <div className="mr-[5px] ml-3.5 flex flex-col gap-1 pt-2">
        <button type="button" aria-label="edit"><Icon name="tablePen" /></button>
        <button type="button" aria-label="rename"><Icon name="rename" /></button>
      </div>
    </div>
  );
}

function Settings() {
  return (
    <section className="flex min-w-0 flex-col border border-[#d3d4d8]">
      <div className="flex h-8 items-center justify-between pt-0.5 pr-[3px] pl-[7px]">
        <h2 className="text-[21px] leading-7 font-light text-[#2a569c]">设置</h2>
        <PanelControls />
      </div>
      <h3 className="h-[26px] pl-1.5 text-[15px] leading-6 font-light text-[#2a569c]">系数形式偏微分方程</h3>
      <div className="mt-2 flex h-[22px] items-center pr-[5px] pl-[5px]">
        <label htmlFor="lbl" className="w-[37px] text-xs">标签:</label>
        <input id="lbl" className={field} defaultValue="系数形式偏微分方程" />
        <button type="button" aria-label="rename window" className="ml-2 flex h-[22px] w-5 items-center justify-center rounded-sm border border-[#d3d4d8] bg-[#ececec]"><Icon name="labelWin" /></button>
      </div>
      <div className="mt-1.5 flex items-center pr-[33px] pl-[5px]">
        <label htmlFor="nm" className="w-[37px] text-xs">名称:</label>
        <input id="nm" className={field} defaultValue="c" />
      </div>

      <SectionHead title="域选择" open className="mt-[9px]" />
      <div className="mt-[9px] flex items-center px-[5px]">
        <label htmlFor="sel" className="w-[37px] text-xs">选择:</label>
        <div className="relative flex-1">
          <select id="sel" className="block h-[21px] w-full appearance-none rounded-sm border border-[#d3d4d8] bg-gradient-to-b from-[#f1f1f1] to-[#e5e5e5] pl-3 text-xs leading-4">
            <option>手动</option>
          </select>
          <span className="pointer-events-none absolute top-[9px] right-[7px] flex"><Caret /></span>
        </div>
      </div>
      <div className="mt-1.5 flex pl-[5px]">
        <button type="button" aria-label="active" aria-pressed="true" className="mt-px flex size-[38px] shrink-0 items-center justify-center rounded-sm border border-[#1c8be0] bg-[#9dd0f8]">
          <svg viewBox="0 0 30 14" className="h-3.5 w-[30px]">
            <rect x=".7" y=".7" width="28.6" height="12.6" rx="1" fill="#dfe3e0" stroke="#44546a" strokeWidth="1.3" />
            <rect x="3" y="4" width="16" height="6" rx="3" fill="#55ab3f" />
            <rect x="18.5" y="2" width="9" height="10" fill="#b5b5b5" stroke="#44546a" />
          </svg>
        </button>
        <ul role="listbox" aria-label="domains" className="ml-2 h-[120px] flex-1 border border-b-[3px] border-[#d3d4d8] pt-1 pl-1.5 text-xs leading-4">
          <li role="option" aria-selected="false">2</li>
        </ul>
        <div className="mr-[5px] ml-[13px] grid grid-cols-2 content-start gap-x-3 gap-y-1">
          {["cubesBlue", "plusGray", "copy", "minus", "pasteBlue", "clearsel", "target"].map((n) => (
            <button key={n} type="button" aria-label={n}><Icon name={n} /></button>
          ))}
        </div>
      </div>

      <SectionHead title="方程" className="mt-[11px]" />
      <SectionHead title="单位" open className="mt-0.5" />
      <div className="relative pt-[9px] pb-3 pl-[5px]">
        <UnitTable head="因变量物理量" />
        <UnitTable head="源项物理量" className="mt-[7px]" />
        <span className="absolute top-px right-[35px] bottom-1 -left-0.5 border-2 border-[#ee1c25]" />
      </div>

      <SectionHead title="离散化" />
      <SectionHead title="因变量" open className="mt-0.5" />
      <div className="relative px-[5px] pt-[9px]">
        <div className="flex items-center">
          <label htmlFor="f1" className="w-[61px] text-xs">场名称:</label>
          <input id="f1" className={field} defaultValue="p" />
        </div>
        <div className="mt-1.5 flex items-center">
          <label htmlFor="f2" className="w-[61px] text-xs">因变量数:</label>
          <input id="f2" className={field} defaultValue="1" />
        </div>
        <div className="mt-1.5 flex">
          <label htmlFor="f3" className="w-[61px] text-xs leading-[18px]">因变量:</label>
          <div className="h-[100px] flex-1 border border-b-[3px] border-[#d3d4d8] bg-[#fcfdff]">
            <input id="f3" className="block h-[21px] w-full border-r border-b border-[#a9a9a9] bg-white px-[3px] text-xs outline-none" defaultValue="p" />
          </div>
        </div>
        <span className="absolute top-0.5 -left-1 h-[85px] w-[186px] border-2 border-[#ee1c25]" />
      </div>
      <div className="mt-[5px] flex h-[18px] items-center gap-2 pl-[69px]">
        <button type="button" aria-label="add"><Icon name="plus" /></button>
        <button type="button" aria-label="clear list"><Icon name="listX" /></button>
      </div>
    </section>
  );
}

/* ---------- graphics ---------- */

function TabStrip({ items }: { items: { t: string; close?: boolean }[] }) {
  return (
    <div className="flex h-[31px] shrink-0 items-end gap-2 border-b border-[#d3d4d8] pl-1">
      {items.map((it, i) => (
        <button
          key={it.t}
          type="button"
          className={`flex h-[25px] items-center px-1 text-[13px] leading-5 whitespace-nowrap ${i === 0 ? "-mb-px h-[26px] border border-b-0 border-[#d3d4d8] bg-[#fafbff] text-[#2a569c]" : "bg-[#ebebeb]"}`}
        >
          {it.t}
          {it.close && (
            <svg viewBox="0 0 10 10" className="mr-[3px] mb-px ml-2 size-[9px]"><path d="M.5 .5 L9.5 9.5 M9.5 .5 L.5 9.5" stroke="#cbd3de" strokeWidth="1.2" /></svg>
          )}
        </button>
      ))}
      <div className="mr-[3px] mb-[3px] ml-auto"><PanelControls /></div>
    </div>
  );
}

const xTicks: [number, string][] = [[114, "-0.02"], [207, "0"], [301, "0.02"], [395, "0.04"], [488, "0.06"], [582, "0.08"], [676, "0.1"], [769, "0.12"]];
const yLabels = ["0.16", "0.15", "0.14", "0.13", "0.12", "0.11", "0.1", "0.09", "0.08", "0.07", "0.06", "0.05"];

function Plot() {
  return (
    <svg viewBox="0 0 856 609" className="min-h-0 w-full flex-1 bg-white" fontFamily="DejaVu Sans" fontSize="12">
      <path d="M207 8 V586" stroke="#c8c8c8" strokeWidth="2" strokeDasharray="14 3 2 3" />
      {/* piston */}
      <path
        d="M207 469 Q245 472 282 492 C289 495.5 292 496.5 297 496.5 C313 495 325 483 324.700 468 C329 462 333 458 340 455 H387 Q394 456 395 464 V489 Q394 492 391 492 H378 Q373 492 373 498 Q373 504 378 504 H391 Q394 504 395 507 V517 Q394 520 391 520 H378 Q373 520 373 526 Q373 532 378 532 H391 Q394 532 395 535 V554 L377 581.500 H282.500 V539 H207Z"
        fill="#c8c8c8" stroke="#111" strokeWidth="1.2"
      />
      {/* cylinder liner */}
      <path
        d="M395 55.500 H417 L418 56.500 V67.500 H434.500 L437 62.500 H448.500 L450.500 67 V111.500 L449.500 112.500 H422 Q418 113 418 116 Q418 118 421 119.500 L427.500 124 V154.500 L425 156 Q419 157 418 164 V420 L420 421.500 H425.500 V477 H420 L418 479 V545 L409 570.500 H395Z"
        fill="#c8c8c8" stroke="#111" strokeWidth="1.2"
      />
      {/* selected combustion chamber */}
      <path
        d="M207 55.500 H395 V464 Q394 456 387 455 H340 C333 458 329 462 324.700 468 C325 483 313 495 297 496.500 C292 496.500 289 495.500 282 492 Q245 472 207 469Z"
        fill="#b3b3f4"
      />
      <path
        d="M207 55.500 H395 V464 Q394 456 387 455 H340 C333 458 329 462 324.700 468 C325 483 313 495 297 496.500 C292 496.500 289 495.500 282 492 Q245 472 207 469"
        fill="none" stroke="#0000f8" strokeWidth="1.6"
      />
      <path d="M207.500 55 V469" stroke="#7c7ce0" strokeWidth="1" />
      <path d="M207 64 V469" stroke="#0000f0" strokeWidth="2" strokeDasharray="3 2 2 14.500" />
      {/* frame and ticks */}
      <path d="M51 8 H847 V586 H51Z" fill="none" stroke="#808080" strokeWidth="2" />
      {xTicks.map(([x, t]) => (
        <g key={t}>
          <path d={`M${x} 0 V8 M${x} 586 V594`} stroke="#808080" strokeWidth="2" />
          <text x={x + 1} y="604">{t}</text>
        </g>
      ))}
      {yLabels.map((t, i) => {
        const y = Math.round(47 + i * 46.9);
        return (
          <g key={t}>
            <path d={`M43 ${y} H51 M847 ${y} H855`} stroke="#808080" strokeWidth="2" />
            <text x="42" y={y + 10} textAnchor="end">{t}</text>
          </g>
        );
      })}
      <path d="M46 314 L51 319.500 L46 325Z M45 591.500 L51 586 L57 591.500Z" fill="#000" />
      <text x="55" y="19" fontSize="11">m</text>
      <text x="831" y="581" fontSize="11">m</text>
      <text x="209" y="582" fill="#a3a3a3">r=0</text>
      <g transform="translate(821 13)">{LOGO}</g>
    </svg>
  );
}

function Graphics() {
  return (
    <section className="flex min-h-0 flex-1 flex-col border border-[#d3d4d8]">
      <TabStrip items={[{ t: "图形" }, { t: "函数图", close: true }, { t: "收敛图 1", close: true }]} />
      <div className="flex h-[30px] shrink-0 items-center overflow-hidden pt-1 pl-[3px]">
        <Tool name="zoomIn" /><Tool name="zoomOut" /><Tool name="zoomBox" menu /><Tool name="target" /><Tool name="extents" />
        <Sep /><Tool name="axes" menu />
        <Sep /><Tool name="dom" menu />
        <Sep /><Tool name="selDomain" menu /><Tool name="selDomainBlue" menu /><Tool name="select" /><Tool name="clearsel" />
        <Sep /><Tool name="hide" /><Tool name="resetHide" /><Tool name="viewWin" menu />
        <Sep /><Tool name="grid" on />
        <Sep /><Tool name="noClip" /><Tool name="palette" menu />
        <Sep /><Tool name="shutter" menu /><Tool name="camera" /><Tool name="print" />
      </div>
      <Plot />
    </section>
  );
}

/* ---------- messages ---------- */

const times = ["3:13", "3:13", "3:14", "3:14"];

function Messages() {
  return (
    <section className="flex h-[168px] shrink-0 flex-col border border-[#d3d4d8]">
      <TabStrip items={[{ t: "消息", close: true }, { t: "进度" }, { t: "日志" }, { t: "表格 1", close: true }]} />
      <div className="flex h-[30px] shrink-0 items-center pt-1 pl-[3px]">
        <Tool name="broom" />
        <Tool name="msgWin" on />
      </div>
      <div className="mx-1 mb-1 flex min-h-0 flex-1 flex-col border border-[#d3d4d8]">
        <div className="flex min-h-0 flex-1">
          <div className="min-w-0 flex-1 overflow-x-clip pl-[3px] text-xs whitespace-nowrap">
            {times.map((t, i) => (
              <p key={i} className="h-[17px] leading-3">
                [2023年7月3日 下午{t}] 保存的文件：E:\Learning\Comsol\官方案例\三缸往复式发动机\跟着教程做的模型\三缸往复式发动机.mph (4 MB)
              </p>
            ))}
          </div>
          <div className="flex w-[17px] shrink-0 flex-col">
            <Chevron d="up" />
            <div className="flex-[40] bg-white" />
            <div className="flex-[8] bg-[#e4e5e7]" />
            <Chevron d="down" />
          </div>
        </div>
        <div className="flex h-[17px] shrink-0">
          <Chevron d="left" />
          <div className="flex-[718] bg-[#e4e5e7]" />
          <div className="flex-[77] bg-white" />
          <Chevron d="right" />
          <div className="w-[17px] bg-[#efefef]" />
        </div>
      </div>
    </section>
  );
}

export default function App() {
  return (
    <div className="flex h-screen flex-col overflow-hidden rounded-lg bg-[#9e5b68] px-1 pb-px font-['Noto_Sans','Noto_Sans_CJK_SC',sans-serif] text-black">
      <TitleBar />
      <div className="flex min-h-0 flex-1 flex-col rounded-b-md bg-[#fafbff]">
        <Ribbon />
        <main className="mx-[7px] mt-1 grid min-h-0 flex-1 grid-cols-[378fr_480fr_858fr] gap-[5px]">
          <ModelBuilder />
          <Settings />
          <div className="flex min-h-0 min-w-0 flex-col gap-[5px]">
            <Graphics />
            <Messages />
          </div>
        </main>
        <footer className="flex h-[37px] shrink-0 items-center pt-1">
          <span className="w-[66.5%] text-right text-xs">1.33 GB | 1.71 GB</span>
        </footer>
      </div>
    </div>
  );
}
